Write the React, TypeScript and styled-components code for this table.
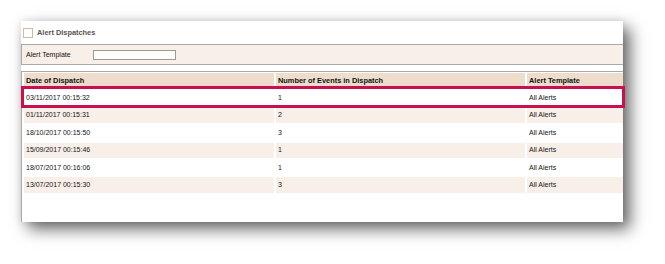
import React from "react";
import styled, { createGlobalStyle } from "styled-components";

const Global = createGlobalStyle`
  html, body { margin: 0; padding: 0; background: #ffffff; }
  body { font-family: "Liberation Sans", Arial, sans-serif; }
`;

const Page = styled.div`
  padding: 21px 0 0 21px;
  width: 665px;
  height: 264px;
  box-sizing: border-box;
`;

const Panel = styled.div`
  position: relative;
  width: 602px;
  height: 201px;
  background: #ffffff;
  display: flex;
  flex-direction: column;
  box-shadow: 7px 7px 15px rgba(0, 0, 0, 0.6), 0 0 8px rgba(0, 0, 0, 0.1);
`;

const TitleBar = styled.div`
  height: 23px;
  display: flex;
  align-items: center;
  gap: 4px;
  padding-left: 2px;
  box-sizing: border-box;
`;

const CheckBox = styled.span`
  width: 10px;
  height: 10px;
  box-sizing: border-box;
  border: 1px solid #d8b89c;
  background: #fff;
  margin-top: 1px;
`;

const Title = styled.span`
  font-size: 7.4px;
  color: #555;
  font-weight: 700;
`;

const FilterBar = styled.div`
  height: 21px;
  box-sizing: border-box;
  border-top: 1px solid #a9a9a9;
  border-bottom: 1px solid #a9a9a9;
  border-left: 1px solid #a9a9a9;
  background: #f8efe9;
  display: flex;
  align-items: center;
  padding-left: 4px;
`;

const Label = styled.span`
  font-size: 7px;
  color: #111;
  width: 67px;
`;

const Input = styled.span`
  width: 83px;
  height: 10px;
  box-sizing: border-box;
  border: 1px solid #9a9a9a;
  background: #fffdf7;
`;

const TableWrap = styled.div`
  margin-top: 6px;
  flex: 1;
  border-top: 1px solid #a9a9a9;
  border-left: 1px solid #a9a9a9;
  padding: 1px 0 0 2px;
  display: grid;
  grid-template-columns: 250px 249px 1fr;
  grid-auto-rows: 15.4px;
  gap: 2px;
  align-content: start;
`;

const Cell = styled.div<{ $head?: boolean; $alt?: boolean }>`
  display: flex;
  align-items: center;
  padding: 0 0 1px 2px;
  box-sizing: border-box;
  white-space: nowrap;
  overflow: hidden;
  font-size: ${(p) => (p.$head ? "7.4px" : "7px")};
  font-weight: ${(p) => (p.$head ? 700 : 400)};
  color: ${(p) => (p.$head ? "#111" : "#151515")};
  background: ${(p) => (p.$head ? "#eeddcc" : p.$alt ? "#f8efe9" : "#ffffff")};
`;

const Highlight = styled.div`
  position: absolute;
  left: 0;
  top: 65px;
  width: 604px;
  height: 22px;
  box-sizing: border-box;
  border: 3px solid #c8104f;
  pointer-events: none;
`;

const rows = [
  ["03/11/2017 00:15:32", "1", "All Alerts"],
  ["01/11/2017 00:15:31", "2", "All Alerts"],
  ["18/10/2017 00:15:50", "3", "All Alerts"],
  ["15/09/2017 00:15:46", "1", "All Alerts"],
  ["18/07/2017 00:16:06", "1", "All Alerts"],
  ["13/07/2017 00:15:30", "3", "All Alerts"],
];

export default function App() {
  return (
    <>
      <Global />
      <Page>
        <Panel>
          <TitleBar>
            <CheckBox />
            <Title>Alert Dispatches</Title>
          </TitleBar>
          <FilterBar>
            <Label>Alert Template</Label>
            <Input />
          </FilterBar>
          <TableWrap>
            <Cell $head>Date of Dispatch</Cell>
            <Cell $head>Number of Events in Dispatch</Cell>
            <Cell $head>Alert Template</Cell>
            {rows.map((r, i) =>
              r.map((c, j) => (
                <Cell key={`${i}-${j}`} $alt={i % 2 === 1}>
                  {c}
                </Cell>
              ))
            )}
          </TableWrap>
          <Highlight />
        </Panel>
      </Page>
    </>
  );
}
